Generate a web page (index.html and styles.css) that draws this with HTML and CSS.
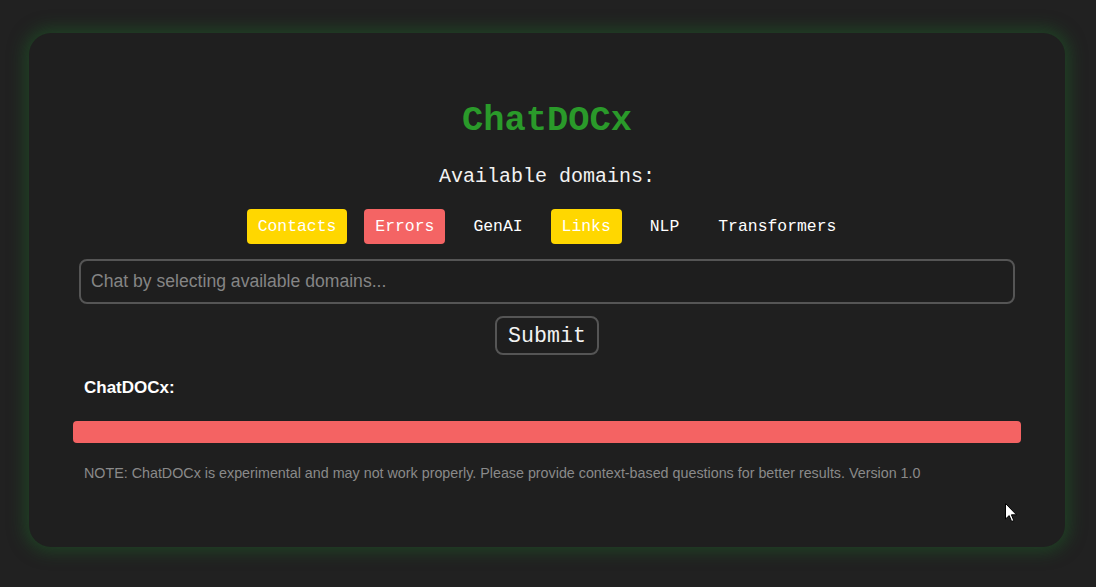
FILE: index.html
```
<!DOCTYPE html>
<html>
<head>
<meta charset="utf-8">
<link rel="stylesheet" href="styles.css">
</head>
<body>
<div class="card">
  <h1 class="title">ChatDOCx</h1>
  <p class="subtitle">Available domains:</p>
  <div class="chips">
    <span class="chip chip-yellow">Contacts</span>
    <span class="chip chip-red">Errors</span>
    <span class="chip">GenAI</span>
    <span class="chip chip-yellow">Links</span>
    <span class="chip">NLP</span>
    <span class="chip">Transformers</span>
  </div>
  <input class="query" type="text" placeholder="Chat by selecting available domains...">
  <div class="actions"><button class="submit">Submit</button></div>
  <div class="label">ChatDOCx:</div>
  <div class="bar"></div>
  <p class="note">NOTE: ChatDOCx is experimental and may not work properly. Please provide context-based questions for better results. Version 1.0</p>
  <svg class="cursor" width="13" height="20" viewBox="0 0 13 20"><path d="M0.5 0.5 L0.5 16 L4.2 12.6 L6.6 18.5 L8.8 17.6 L6.4 11.8 L11.5 11.8 Z" fill="#fff" stroke="#000" stroke-width="1"/></svg>
</div>
</body>
</html>
```
FILE: styles.css
```
html, body {
  margin: 0;
  padding: 0;
  background: #212121;
}
body {
  padding: 33px 31px 40px 29px;
  font-family: "Liberation Sans", Arial, sans-serif;
}
.card {
  position: relative;
  background: #1f1f1f;
  border-radius: 22px;
  box-shadow: 0 0 16px 5px rgba(30, 95, 40, 0.5);
  padding: 68px 44px 66px;
  display: flex;
  flex-direction: column;
}
.title {
  margin: 0;
  text-align: center;
  font-family: "Liberation Mono", "Courier New", monospace;
  font-size: 35.4px;
  line-height: 40px;
  font-weight: bold;
  color: #2a9a2a;
}
.subtitle {
  margin: 24px 0 0;
  text-align: center;
  font-family: "Liberation Mono", "Courier New", monospace;
  font-size: 20px;
  line-height: 24px;
  color: #f2f2f2;
}
.chips {
  margin-top: 20px;
  display: flex;
  justify-content: center;
  gap: 17px;
}
.chip {
  font-family: "Liberation Mono", "Courier New", monospace;
  font-size: 16.4px;
  line-height: 19px;
  padding: 8px 11px;
  border-radius: 4px;
  color: #ffffff;
}
.chip-yellow { background: #ffd700; }
.chip-red { background: #f46464; }
.query {
  margin: 15px 6px 0;
  height: 45px;
  box-sizing: border-box;
  border: 2px solid #555;
  border-radius: 8px;
  background: #1e1e1e;
  padding: 0 10px;
  font-family: "Liberation Sans", Arial, sans-serif;
  font-size: 17.6px;
  color: #ddd;
  outline: none;
}
.query::placeholder { color: #858585; }
.actions {
  margin-top: 12px;
  display: flex;
  justify-content: center;
}
.submit {
  height: 39px;
  width: 104px;
  box-sizing: border-box;
  border: 2px solid #555;
  border-radius: 8px;
  background: #1e1e1e;
  color: #f2f2f2;
  font-family: "Liberation Mono", "Courier New", monospace;
  font-size: 21.6px;
  padding: 0;
}
.label {
  margin: 23px 0 0 11px;
  font-size: 17px;
  line-height: 20px;
  font-weight: bold;
  color: #ffffff;
}
.bar {
  margin-top: 23px;
  height: 22px;
  border-radius: 4px;
  background: #f46363;
}
.note {
  margin: 22px 0 0 11px;
  font-size: 14.3px;
  line-height: 16px;
  color: #8a8a8a;
}
.cursor {
  position: absolute;
  left: 976px;
  top: 470px;
}
```
